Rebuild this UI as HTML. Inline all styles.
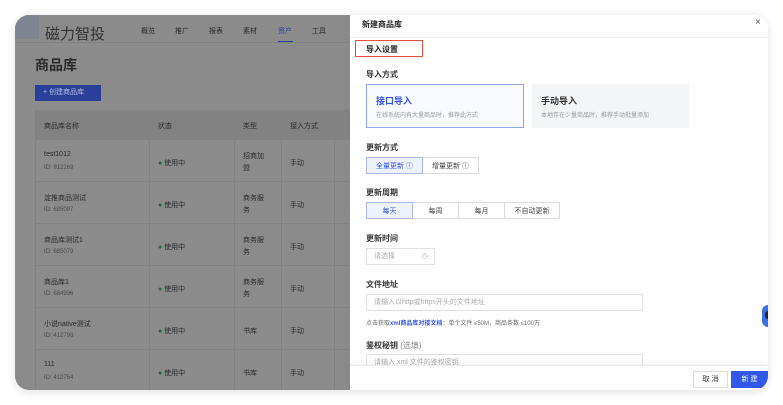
<!DOCTYPE html>
<html><head><meta charset="utf-8"><style>
*{margin:0;padding:0;box-sizing:border-box}
body{width:783px;height:405px;background:#fff;font-family:"Liberation Sans","Noto Sans CJK SC",sans-serif;position:relative;overflow:hidden;color:#222}
.win{position:absolute;left:15px;top:15px;width:753px;height:375px;border-radius:14px;overflow:hidden;box-shadow:0 2px 10px rgba(0,0,0,.12)}
.left{position:absolute;left:0;top:0;width:335px;height:375px;background:#8b8b8b;color:#2a2a2a}
.a{position:absolute;white-space:nowrap}
.drawer{position:absolute;left:335px;top:0;width:418px;height:375px;background:#fff}
.lbl{position:absolute;left:16px;font-size:8px;font-weight:bold;color:#333}
.seg{position:absolute;display:flex;height:17px;font-size:7px}
.seg div{border:1px solid #ddd;display:flex;align-items:center;justify-content:center;color:#444;margin-left:-1px}
.seg .on{border-color:#a9b8f0;background:#eef2fd;color:#3355e0;z-index:1}
.inp{position:absolute;border:1px solid #e2e2e2;height:17px;font-size:7px;color:#aaa;padding-left:7px;line-height:15px}
</style></head><body>
<div class="win">
<div class="left">
 <div class="a" style="left:0;top:0;width:24px;height:24px;background:#7f8590"></div>
 <div class="a" style="left:30px;top:8px;font-size:15px;color:#333">磁力智投</div>
 <div class="a" style="left:126px;top:11px;font-size:7px">概览</div>
 <div class="a" style="left:160px;top:11px;font-size:7px">推广</div>
 <div class="a" style="left:194px;top:11px;font-size:7px">报表</div>
 <div class="a" style="left:228px;top:11px;font-size:7px">素材</div>
 <div class="a" style="left:263px;top:11px;font-size:7px;color:#2b3f99">资产</div>
 <div class="a" style="left:263px;top:26px;width:15px;height:1px;background:#2b3f99"></div>
 <div class="a" style="left:297px;top:11px;font-size:7px">工具</div>
 <div class="a" style="left:0;top:27px;width:335px;height:1px;background:#818181"></div>
 <div class="a" style="left:20px;top:40px;font-size:14px;font-weight:bold">商品库</div>
 <div class="a" style="left:20px;top:70px;width:66px;height:16px;background:#2a3f9a;color:#b6c0e0;font-size:7px;line-height:16px;padding-left:8px">+ 创建商品库</div>
 <div class="a" style="left:20px;top:95px;width:315px;height:30px;background:#828282"></div>
 <div class="a" style="left:29px;top:106px;font-size:7px">商品库名称</div>
 <div class="a" style="left:143px;top:106px;font-size:7px">状态</div>
 <div class="a" style="left:228px;top:106px;font-size:7px">类型</div>
 <div class="a" style="left:275px;top:106px;font-size:7px">接入方式</div>
 <div class="a" style="left:134px;top:95px;width:1px;height:280px;background:#818181"></div>
 <div class="a" style="left:219px;top:95px;width:1px;height:280px;background:#818181"></div>
 <div class="a" style="left:266px;top:95px;width:1px;height:280px;background:#818181"></div>
 <div class="a" style="left:319px;top:95px;width:1px;height:280px;background:#818181"></div>
 <div class="a" style="left:20px;top:95px;width:1px;height:280px;background:#818181"></div>
</div>
<div class="drawer">
 <div class="a" style="left:12px;top:4px;font-size:8px;font-weight:bold">新建商品库</div>
 <div class="a" style="left:405px;top:2px;font-size:10px;color:#555">×</div>
 <div class="a" style="left:0;top:22px;width:418px;height:1px;background:#eee"></div>
 <div class="a" style="left:5px;top:25px;width:68px;height:17px;border:1px solid #e5533f"></div>
 <div class="a" style="left:16px;top:29px;font-size:8px;font-weight:bold">导入设置</div>
 <div class="lbl" style="top:54px">导入方式</div>
 <div class="a" style="left:16px;top:69px;width:158px;height:44px;border:1px solid #8fa6ee;background:#f8faff"></div>
 <div class="a" style="left:26px;top:79px;font-size:9px;font-weight:bold;color:#3355e0">接口导入</div>
 <div class="a" style="left:26px;top:95px;font-size:6px;color:#999">在线系统内有大量商品时，推荐此方式</div>
 <div class="a" style="left:182px;top:69px;width:157px;height:44px;background:#f4f5f7"></div>
 <div class="a" style="left:191px;top:79px;font-size:9px;font-weight:bold;color:#333">手动导入</div>
 <div class="a" style="left:191px;top:95px;font-size:6px;color:#999">本地存在少量商品时，推荐手动批量添加</div>
 <div class="lbl" style="top:127px">更新方式</div>
 <div class="seg" style="left:16px;top:142px"><div class="on" style="width:57px;margin-left:0">全量更新 ⓘ</div><div style="width:57px">增量更新 ⓘ</div></div>
 <div class="lbl" style="top:172px">更新周期</div>
 <div class="seg" style="left:16px;top:187px"><div class="on" style="width:47px;margin-left:0">每天</div><div style="width:47px">每周</div><div style="width:47px">每月</div><div style="width:56px">不自动更新</div></div>
 <div class="lbl" style="top:218px">更新时间</div>
 <div class="inp" style="left:16px;top:233px;width:69px">请选择<span style="position:absolute;right:6px">◷</span></div>
 <div class="lbl" style="top:264px">文件地址</div>
 <div class="inp" style="left:16px;top:279px;width:277px">请输入以http或https开头的文件地址</div>
 <div class="a" style="left:16px;top:303px;font-size:6px;color:#666">点击获取<span style="color:#3355e0;font-weight:bold">xml商品库对接文档</span>：单个文件 ≤50M，商品条数 ≤100万</div>
 <div class="lbl" style="top:325px">鉴权秘钥 <span style="font-weight:normal;color:#888">(选填)</span></div>
 <div class="inp" style="left:16px;top:339px;width:277px">请输入 xml 文件的鉴权密钥</div>
 <div class="a" style="left:412px;top:290px;width:12px;height:22px;border-radius:7px;background:#3d6fe0"></div>
 <div class="a" style="left:415px;top:296px;width:6px;height:8px;border-radius:3px;background:#1a2540"></div>
 <div class="a" style="left:0;top:350px;width:418px;height:25px;background:#fff;border-top:1px solid #eee;box-shadow:0 -2px 6px rgba(0,0,0,.05)"></div>
 <div class="a" style="left:343px;top:356px;width:35px;height:17px;border:1px solid #ddd;font-size:7px;line-height:15px;text-align:center;color:#333">取 消</div>
 <div class="a" style="left:381px;top:356px;width:37px;height:17px;background:#3158e6;font-size:7px;line-height:17px;text-align:center;color:#fff">新 建</div>
</div>
</div>
<div style="position:absolute;left:15px;top:15px;width:335px;height:375px;color:#2a2a2a;font-size:7px;overflow:hidden;border-radius:14px 0 0 14px">
 <div class="a" style="left:29px;top:136px">test1012</div><div class="a" style="left:29px;top:150px;font-size:6px;color:#4a4a4a">ID: 912269</div><div class="a" style="left:143px;top:143px"><span style="color:#1f6b3a">●</span> 使用中</div><div class="a" style="left:228px;top:136px;line-height:12px">招商加<br>盟</div><div class="a" style="left:275px;top:143px">手动</div>
 <div class="a" style="left:20px;top:166px;width:315px;height:1px;background:#818181"></div>
 <div class="a" style="left:29px;top:178px">淀推商品测试</div><div class="a" style="left:29px;top:192px;font-size:6px;color:#4a4a4a">ID: 685097</div><div class="a" style="left:143px;top:185px"><span style="color:#1f6b3a">●</span> 使用中</div><div class="a" style="left:228px;top:178px;line-height:12px">商务服<br>务</div><div class="a" style="left:275px;top:185px">手动</div>
 <div class="a" style="left:20px;top:208px;width:315px;height:1px;background:#818181"></div>
 <div class="a" style="left:29px;top:220px">商品库测试1</div><div class="a" style="left:29px;top:234px;font-size:6px;color:#4a4a4a">ID: 685079</div><div class="a" style="left:143px;top:227px"><span style="color:#1f6b3a">●</span> 使用中</div><div class="a" style="left:228px;top:220px;line-height:12px">商务服<br>务</div><div class="a" style="left:275px;top:227px">手动</div>
 <div class="a" style="left:20px;top:250px;width:315px;height:1px;background:#818181"></div>
 <div class="a" style="left:29px;top:262px">商品库1</div><div class="a" style="left:29px;top:276px;font-size:6px;color:#4a4a4a">ID: 684996</div><div class="a" style="left:143px;top:269px"><span style="color:#1f6b3a">●</span> 使用中</div><div class="a" style="left:228px;top:262px;line-height:12px">商务服<br>务</div><div class="a" style="left:275px;top:269px">手动</div>
 <div class="a" style="left:20px;top:292px;width:315px;height:1px;background:#818181"></div>
 <div class="a" style="left:29px;top:304px">小说native测试</div><div class="a" style="left:29px;top:318px;font-size:6px;color:#4a4a4a">ID: 412798</div><div class="a" style="left:143px;top:311px"><span style="color:#1f6b3a">●</span> 使用中</div><div class="a" style="left:228px;top:311px">书库</div><div class="a" style="left:275px;top:311px">手动</div>
 <div class="a" style="left:20px;top:334px;width:315px;height:1px;background:#818181"></div>
 <div class="a" style="left:29px;top:346px">111</div><div class="a" style="left:29px;top:360px;font-size:6px;color:#4a4a4a">ID: 412764</div><div class="a" style="left:143px;top:353px"><span style="color:#1f6b3a">●</span> 使用中</div><div class="a" style="left:228px;top:353px">书库</div><div class="a" style="left:275px;top:353px">手动</div>
</div>
</body></html>
